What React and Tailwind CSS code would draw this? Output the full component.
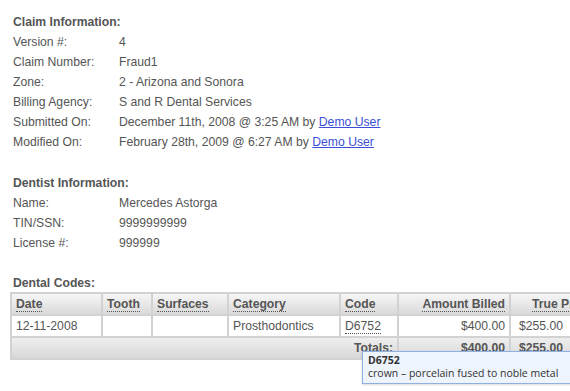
import React from "react";

const font = { fontFamily: '"Liberation Sans", Arial, sans-serif' };

function Row({ label, children }) {
  return (
    <div className="flex h-5 leading-5">
      <div className="w-[106px] shrink-0">{label}</div>
      <div className="whitespace-nowrap">{children}</div>
    </div>
  );
}

function Link({ children }) {
  return <a href="#" className="text-[#3b4fd6] underline">{children}</a>;
}

function Abbr({ children }) {
  return <span className="border-b border-dotted border-[#555]">{children}</span>;
}

export default function App() {
  const th = "h-5 px-1 py-0 leading-5 font-bold bg-linear-to-b from-[#f6f6f6] to-[#dadada] whitespace-nowrap";
  const td = "h-5 px-1 py-0 leading-5 bg-white whitespace-nowrap";
  const tf = "h-5 px-1 py-0 leading-5 font-bold bg-linear-to-b from-[#efefef] to-[#d8d8d8] whitespace-nowrap";
  return (
    <div className="relative w-[570px] h-[391px] overflow-hidden bg-white text-[12.2px] text-[#555]" style={font}>
      <div className="pt-3 pl-[13px]">
        <div className="h-5 leading-5 font-bold">Claim Information:</div>
        <Row label="Version #:">4</Row>
        <Row label="Claim Number:">Fraud1</Row>
        <Row label="Zone:">2 - Arizona and Sonora</Row>
        <Row label="Billing Agency:">S and R Dental Services</Row>
        <Row label="Submitted On:">December 11th, 2008 @ 3:25 AM by <Link>Demo User</Link></Row>
        <Row label="Modified On:">February 28th, 2009 @ 6:27 AM by <Link>Demo User</Link></Row>

        <div className="mt-[21px] h-5 leading-5 font-bold">Dentist Information:</div>
        <Row label="Name:">Mercedes Astorga</Row>
        <Row label="TIN/SSN:">9999999999</Row>
        <Row label="License #:">999999</Row>

        <div className="mt-5 h-5 leading-5 font-bold">Dental Codes:</div>
      </div>

      <table className="ml-[10px] mt-[-1px] border-separate border-spacing-[2px] bg-[#d2d2d2] table-fixed w-[653px]">
        <colgroup>
          <col className="w-[89px]" />
          <col className="w-[48px]" />
          <col className="w-[74px]" />
          <col className="w-[110px]" />
          <col className="w-[56px]" />
          <col className="w-[110px]" />
          <col className="w-[150px]" />
        </colgroup>
        <thead>
          <tr>
            <th className={th + " text-left"}><Abbr>Date</Abbr></th>
            <th className={th + " text-left"}><Abbr>Tooth</Abbr></th>
            <th className={th + " text-left"}><Abbr>Surfaces</Abbr></th>
            <th className={th + " text-left"}><Abbr>Category</Abbr></th>
            <th className={th + " text-left"}><Abbr>Code</Abbr></th>
            <th className={th + " text-right"}><Abbr>Amount Billed</Abbr></th>
            <th className={th + " text-left pl-[21px]"}><Abbr>True Price</Abbr></th>
          </tr>
        </thead>
        <tbody>
          <tr>
            <td className={td}>12-11-2008</td>
            <td className={td}></td>
            <td className={td}></td>
            <td className={td}>Prosthodontics</td>
            <td className={td}><Abbr>D6752</Abbr></td>
            <td className={td + " text-right"}>$400.00</td>
            <td className={td + " text-left pl-[8px]"}>$255.00</td>
          </tr>
        </tbody>
        <tfoot>
          <tr>
            <td colSpan={5} className={tf + " text-right"}>Totals:</td>
            <td className={tf + " text-right"}>$400.00</td>
            <td className={tf + " text-left pl-[8px]"}>$255.00</td>
          </tr>
        </tfoot>
      </table>

      <div
        className="absolute left-[362px] top-[351px] w-[240px] border border-[#8eb0e2] bg-[#eef4fc] px-[5px] pt-[2px] pb-[3px] text-[10.5px] leading-[13px] text-[#333] shadow-[0_1px_2px_rgba(0,0,0,0.15)]"
        style={{ fontFamily: '"Open Sans", "Noto Sans", sans-serif' }}
      >
        <div className="font-bold">D6752</div>
        <div className="whitespace-nowrap">crown – porcelain fused to noble metal</div>
      </div>
    </div>
  );
}
